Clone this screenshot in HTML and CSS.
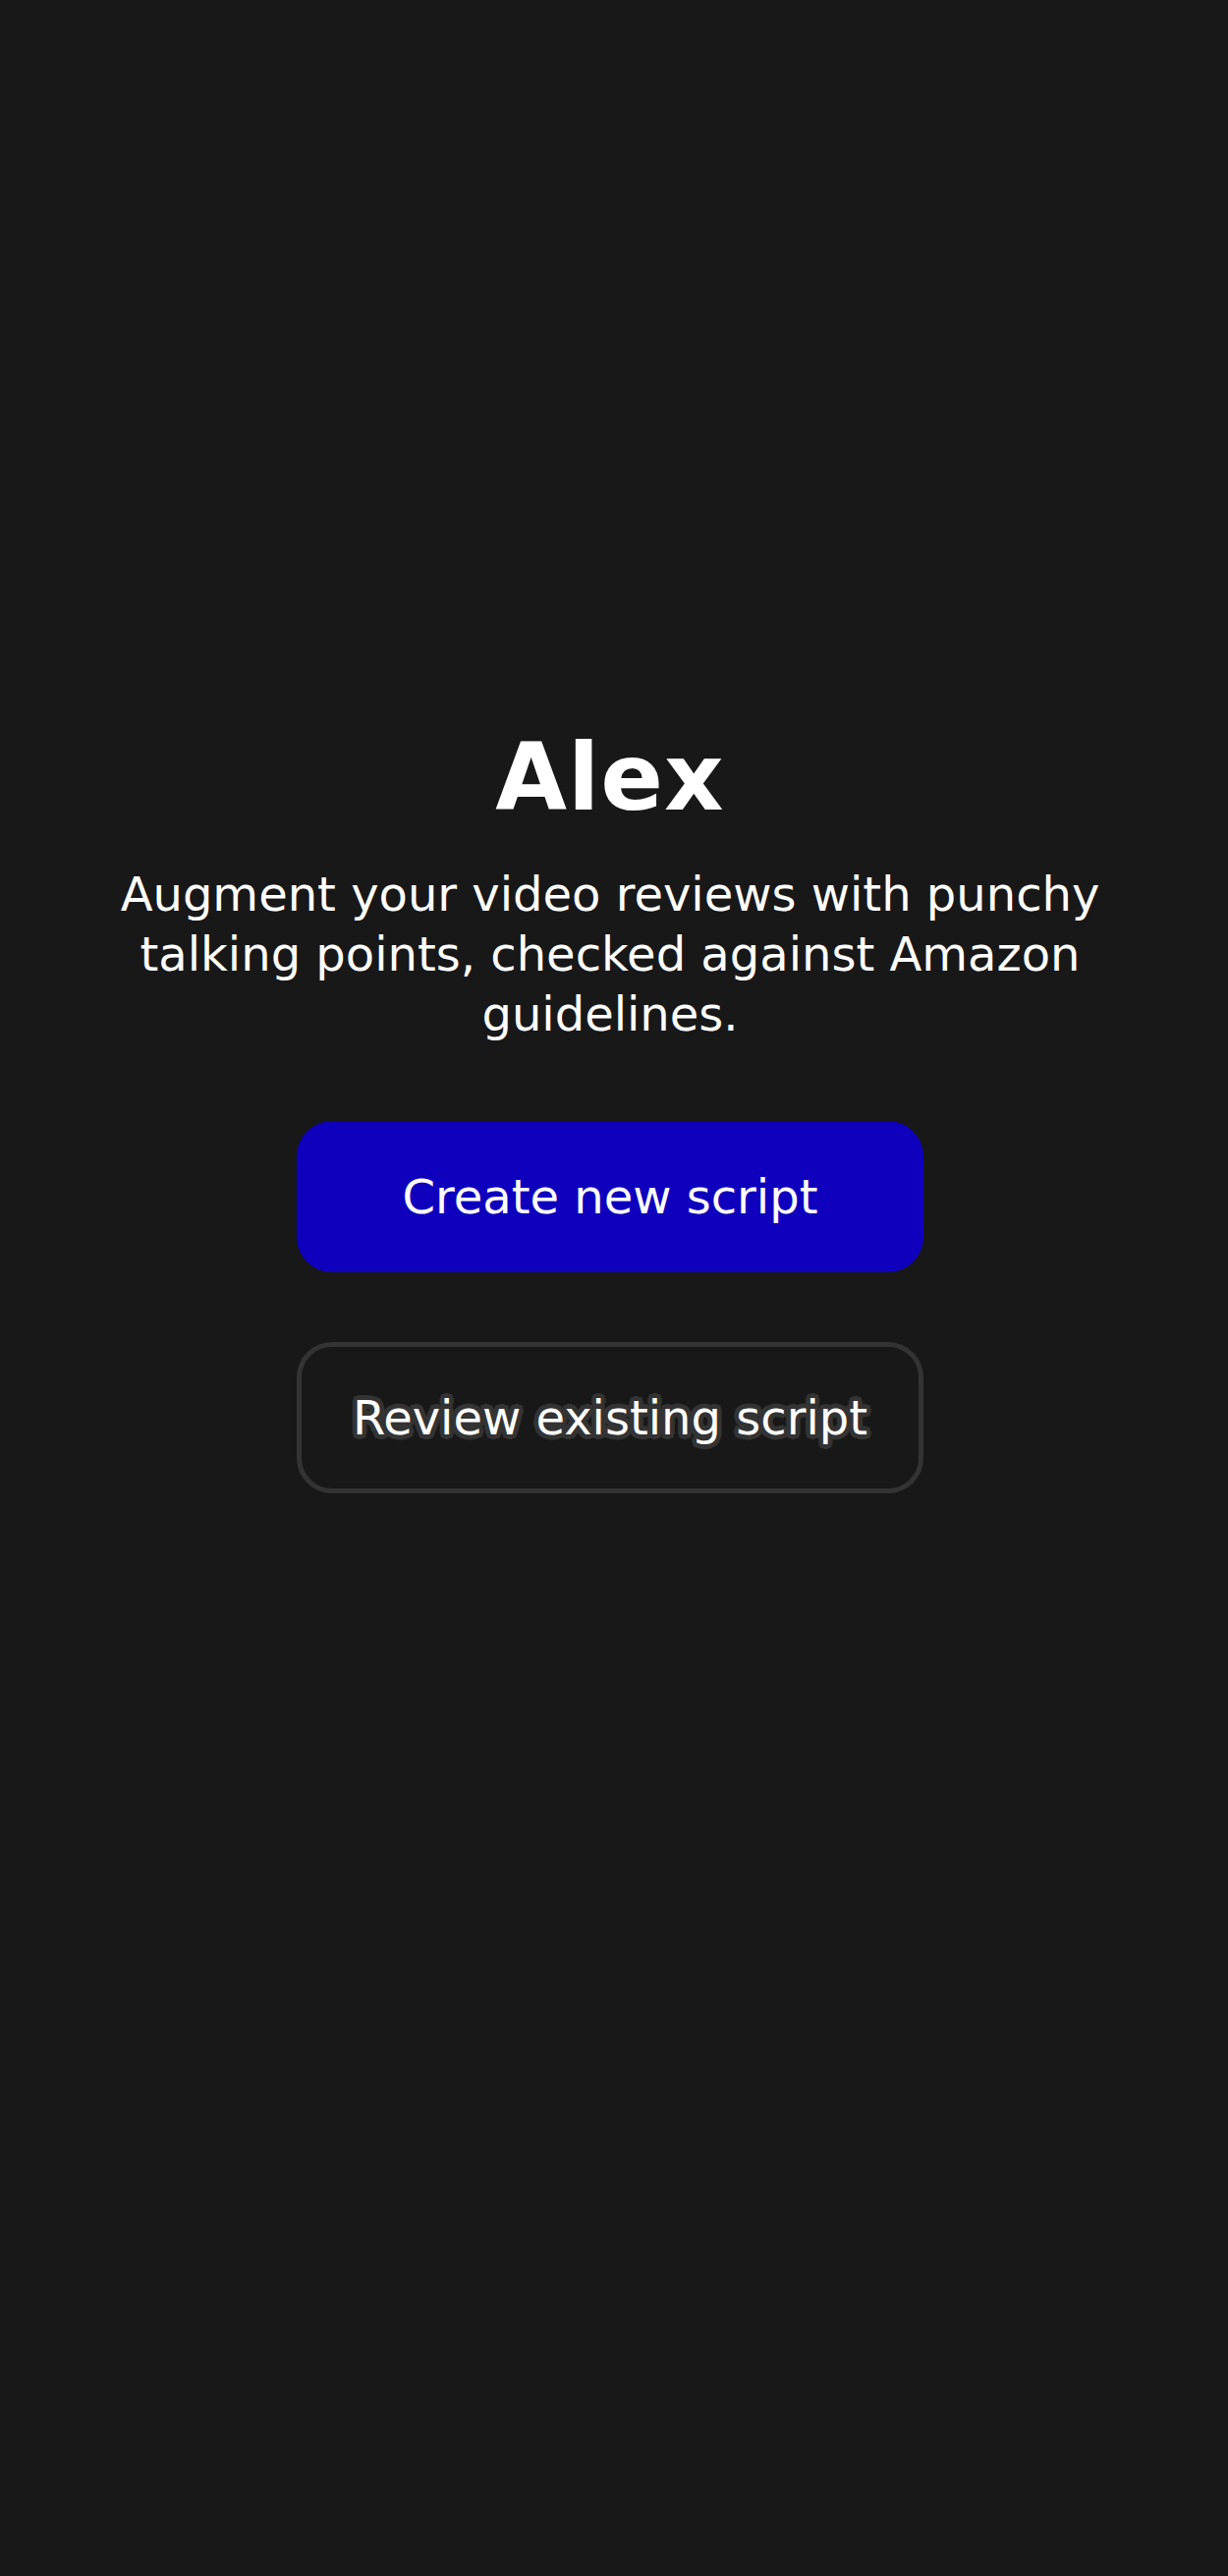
FILE: index.html
```html
<!DOCTYPE html>
<html lang="en">
<head>
<meta charset="utf-8">
<title>Alex</title>
<link rel="stylesheet" href="styles.css">
</head>
<body>
<main class="hero">
  <h1 class="title">Alex</h1>
  <p class="lead">Augment your video reviews with punchy talking points, checked against Amazon guidelines.</p>
  <div class="actions">
    <button class="btn btn-primary" type="button">Create new script</button>
    <button class="btn btn-outline" type="button">Review existing script</button>
  </div>
</main>
</body>
</html>
```

FILE: styles.css
```css
html, body {
  margin: 0;
  padding: 0;
  background: #181818;
}

body {
  min-height: 2622px;
  font-family: "DejaVu Sans", "Liberation Sans", sans-serif;
  color: #ffffff;
}

.hero {
  display: flex;
  flex-direction: column;
  align-items: center;
  padding: 746px 8px 0 0;
}

.title {
  margin: 0;
  font-family: "DejaVu Sans", sans-serif;
  font-weight: 700;
  font-size: 94px;
  line-height: 92px;
  letter-spacing: 1px;
}

.lead {
  margin: 42px 0 0;
  max-width: 1040px;
  text-align: center;
  font-size: 48px;
  line-height: 61px;
  letter-spacing: 0;
}

.actions {
  margin-top: 78px;
  display: flex;
  flex-direction: column;
  gap: 71px;
}

.btn {
  box-sizing: border-box;
  width: 638px;
  height: 154px;
  padding: 0;
  border-radius: 36px;
  font-family: "DejaVu Sans", sans-serif;
  font-size: 48px;
  letter-spacing: 0;
  color: #ffffff;
  cursor: pointer;
}

.btn-primary {
  background: #0f00be;
  border: none;
}

.btn-outline {
  background: #181818;
  border: 5px solid #333333;
  text-shadow:
    5px 0 0 #333, -5px 0 0 #333, 0 5px 0 #333, 0 -5px 0 #333,
    4px 3px 0 #333, -4px 3px 0 #333, 4px -3px 0 #333, -4px -3px 0 #333,
    3px 4px 0 #333, -3px 4px 0 #333, 3px -4px 0 #333, -3px -4px 0 #333,
    2px 0 0 #333, -2px 0 0 #333, 0 2px 0 #333, 0 -2px 0 #333;
}
```
